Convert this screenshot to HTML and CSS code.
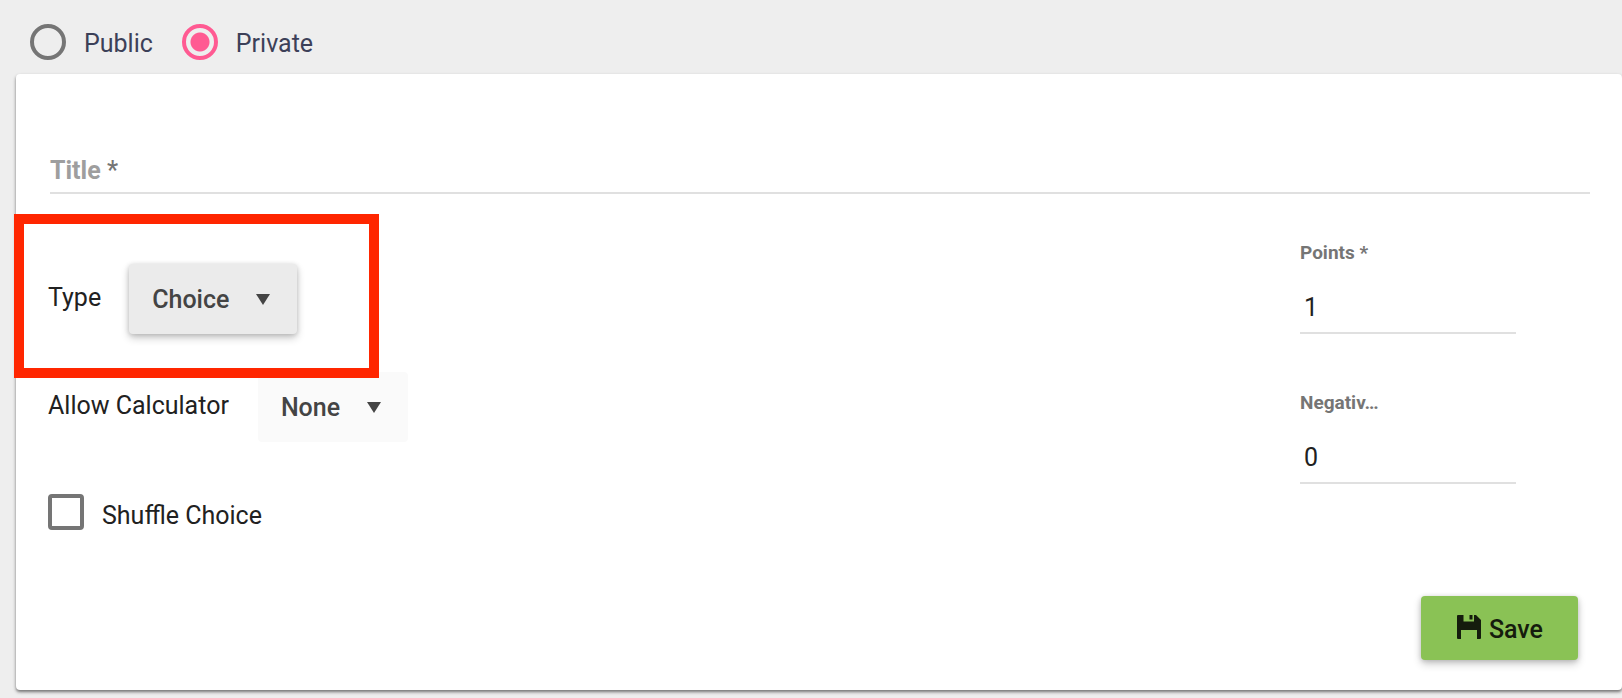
FILE: index.html
```html
<!DOCTYPE html>
<html lang="en">
<head>
<meta charset="utf-8">
<title>Question</title>
<link rel="stylesheet" href="styles.css">
</head>
<body>
<form class="page">
  <div class="visibility" role="radiogroup" aria-label="Visibility">
    <label class="radio"><input class="radio-input" type="radio" name="visibility"><span>Public</span></label>
    <label class="radio"><input class="radio-input" type="radio" name="visibility" checked><span>Private</span></label>
  </div>
  <main class="card">
    <div class="title-field">
      <label class="title-label" for="title">Title <span class="star">*</span></label>
      <input class="title-input" id="title" type="text">
    </div>
    <div class="columns">
      <div class="settings">
        <div class="row type-row">
          <label for="type">Type</label>
          <div class="dropdown raised">
            <select class="select" id="type"><option>Choice</option></select>
            <svg class="arrow" viewBox="0 0 14 11" aria-hidden="true"><path d="M0 0h14L7 11z"/></svg>
          </div>
          <div class="highlight"></div>
        </div>
        <div class="row calculator-row">
          <label for="calculator">Allow Calculator</label>
          <div class="dropdown">
            <select class="select" id="calculator"><option>None</option></select>
            <svg class="arrow" viewBox="0 0 14 11" aria-hidden="true"><path d="M0 0h14L7 11z"/></svg>
          </div>
        </div>
        <label class="check"><input class="check-input" type="checkbox"><span class="check-text">Shuffle Choice</span></label>
      </div>
      <div class="scores">
        <div class="score">
          <label class="score-label" for="points">Points *</label>
          <input class="score-input" id="points" type="text" inputmode="numeric" value="1">
        </div>
        <div class="score">
          <label class="score-label" for="negative">Negativ…</label>
          <input class="score-input" id="negative" type="text" inputmode="numeric" value="0">
        </div>
      </div>
    </div>
    <div class="actions">
      <button class="save" type="button">
        <svg class="save-icon" viewBox="0 0 24 24" aria-hidden="true"><path fill-rule="evenodd" d="M1 0H6.500V6.500H17V0H19L24 5V23Q24 24 23 24H20V15H4V24H1Q0 24 0 23V1Q0 0 1 0ZM12.500 0H15.500V4.500H12.500Z"/></svg>
        <span class="save-text">Save</span>
      </button>
    </div>
  </main>
</form>
</body>
</html>
```
FILE: styles.css
```css
* {
  box-sizing: border-box;
}

body {
  margin: 0;
  background: #eeeeee;
  color: #212121;
  font: 400 25px/32px Roboto, sans-serif;
}

input,
select,
button {
  margin: 0;
  font: inherit;
  color: inherit;
}

.page {
  padding: 24px 0 8px 16px;
}

.visibility {
  display: flex;
  gap: 29px;
  padding: 0 0 14px 14px;
  color: #3c4058;
}

.radio {
  display: flex;
  align-items: center;
  gap: 18px;
}

.radio span {
  padding-top: 4px;
}

.radio-input {
  appearance: none;
  width: 36px;
  height: 36px;
  border: 4px solid #757575;
  border-radius: 50%;
}

.radio-input:checked {
  border-color: #ff5a92;
  background: radial-gradient(circle, #ff5a92 0 9px, transparent 10px);
}

.card {
  padding: 78px 32px 30px;
  background: #ffffff;
  border-radius: 4px;
  box-shadow: 0 2px 3px rgba(0, 0, 0, 0.45), 0 2px 5px rgba(0, 0, 0, 0.1);
}

.title-field {
  display: grid;
  margin-left: 2px;
}

.title-label,
.title-input {
  grid-area: 1 / 1;
}

.title-label {
  padding-top: 3px;
  color: #9e9e9e;
  font-weight: 700;
  pointer-events: none;
}

.star {
  color: #757575;
  font-weight: 500;
}

.title-input {
  width: 100%;
  height: 42px;
  padding: 0;
  border: 0;
  border-bottom: 2px solid #e0e0e0;
  background: transparent;
}

.columns {
  display: flex;
  justify-content: space-between;
}

.settings {
  padding-top: 70px;
}

.row {
  display: flex;
  align-items: center;
  height: 70px;
}

.row > label {
  padding-bottom: 2px;
}

.type-row {
  position: relative;
  gap: 28px;
  margin-bottom: 38px;
}

.calculator-row {
  gap: 29px;
  margin-bottom: 52px;
}

.highlight {
  position: absolute;
  z-index: 1;
  top: -50px;
  left: -34px;
  width: 365px;
  height: 164px;
  border: 10px solid #ff2600;
  pointer-events: none;
}

.dropdown {
  display: grid;
  align-items: center;
  border-radius: 4px;
  background: #fafafa;
  color: #444444;
  font-weight: 500;
}

.raised {
  background: #ebebeb;
  box-shadow: 0 4px 8px rgba(0, 0, 0, 0.2), 0 1px 5px rgba(0, 0, 0, 0.16);
}

.select {
  grid-area: 1 / 1;
  appearance: none;
  height: 70px;
  padding: 2px 67px 0 23px;
  border: 0;
  background: transparent;
}

.arrow {
  grid-area: 1 / 1;
  justify-self: end;
  width: 14px;
  height: 11px;
  margin-right: 27px;
  fill: #444444;
  pointer-events: none;
}

.check {
  display: flex;
  align-items: flex-start;
  gap: 18px;
}

.check-input {
  appearance: none;
  width: 36px;
  height: 36px;
  border: 4px solid #757575;
  border-radius: 4px;
}

.check-text {
  padding-top: 6px;
}

.scores {
  display: flex;
  flex-direction: column;
  gap: 57px;
  width: 216px;
  margin-right: 74px;
  padding-top: 47px;
}

.score {
  display: flex;
  flex-direction: column;
  gap: 27px;
}

.score-label {
  color: #757575;
  font-size: 19px;
  font-weight: 700;
  line-height: 24px;
}

.score-input {
  width: 100%;
  height: 42px;
  padding: 0 4px 10px;
  border: 0;
  border-bottom: 2px solid #e0e0e0;
  background: transparent;
}

.actions {
  display: flex;
  justify-content: flex-end;
  padding: 64px 12px 0 0;
}

.save {
  display: flex;
  align-items: center;
  gap: 8px;
  height: 64px;
  padding: 0 35px 0 36px;
  border: 0;
  border-radius: 4px;
  background: #8ac255;
  box-shadow: 0 4px 8px rgba(0, 0, 0, 0.2), 0 1px 5px rgba(0, 0, 0, 0.16);
  color: #151c0d;
  font-weight: 500;
}

.save-icon {
  width: 24px;
  height: 24px;
  margin-bottom: 3px;
  fill: currentColor;
}

.save-text {
  padding-top: 3px;
}
```
